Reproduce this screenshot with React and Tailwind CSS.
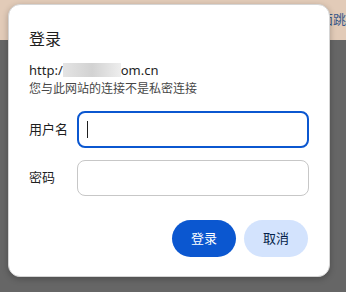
import React from 'react';

function Field({ label, focused }) {
    return (
        <div className="flex items-center">
            <label className="w-[48px] text-[13px] text-[#1f1f1f]">{label}</label>
            <div
                className={
                    focused
                        ? 'flex h-[37px] w-[232px] items-center rounded-[8px] border-2 border-[#0b57d0] bg-white px-[8px]'
                        : 'flex h-[36px] w-[232px] items-center rounded-[8px] border border-[#c7c7c7] bg-white px-[8px]'
                }
            >
                {focused && <span className="h-[17px] w-px bg-[#1f1f1f]" />}
            </div>
        </div>
    );
}

export default function App() {
    return (
        <div
            className="relative h-[292px] w-[346px] overflow-hidden bg-[#666666]"
            style={{ fontFamily: '"Noto Sans", "Noto Sans CJK SC", sans-serif' }}
        >
            {/* page behind the dialog */}
            <div className="flex h-[40px] items-center whitespace-nowrap bg-[#e2cbb8] pl-[307px]">
                <span className="text-[13px] text-[#3b5a8a]">页面跳转</span>
            </div>

            {/* login dialog */}
            <div className="absolute left-[8px] top-[4px] h-[273px] w-[322px] rounded-[12px] border border-[#d5d5d5] bg-white px-[20px] pt-[22px] shadow-[0_2px_6px_rgba(0,0,0,0.25)]">
                <h2 className="text-[16px] leading-[24px] text-[#1f1f1f]">登录</h2>
                <div className="mt-[9px] text-[13px] leading-[20px] text-[#1f1f1f]">
                    http:/
                    <span className="inline-block h-[14px] w-[58px] translate-y-[2px] bg-gradient-to-r from-[#e4e4e4] via-[#d2d2d2] to-[#eeeeee]" />
                    om.cn
                </div>
                <div className="text-[12px] leading-[18px] text-[#474747]">您与此网站的连接不是私密连接</div>

                <div className="mt-[13px] flex flex-col gap-[12px]">
                    <Field label="用户名" focused />
                    <Field label="密码" />
                </div>

                <div className="mt-[24px] flex justify-end gap-[8px] pr-[1px]">
                    <button className="h-[37px] w-[64px] rounded-full bg-[#0b57d0] text-[13px] text-white">登录</button>
                    <button className="h-[37px] w-[64px] rounded-full bg-[#d3e3fd] text-[13px] text-[#041e49]">取消</button>
                </div>
            </div>
        </div>
    );
}
